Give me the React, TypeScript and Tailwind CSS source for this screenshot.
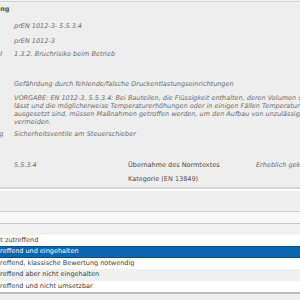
import React from "react";

function Label({ text, pr }: { text?: string; pr: string }) {
  return (
    <div className={`w-[14px] shrink-0 flex justify-end whitespace-nowrap text-[#666] ${pr}`}>
      {text ? <span>{text}</span> : null}
    </div>
  );
}

export default function App() {
  const options = [
    { t: "", cls: "h-[11px] bg-[#f1f1f1]", off: "ml-[-12px]" },
    { t: "Nicht zutreffend", cls: "h-[11px] bg-white", off: "ml-[-14px]" },
    { t: "Zutreffend und eingehalten", cls: "h-[12px] bg-[#0a66af] border-y border-[#0b4c84] text-white", sel: true, off: "ml-[-11px]" },
    { t: "Zutreffend, klassische Bewertung notwendig", cls: "h-[11px] bg-white", off: "ml-[-11px]" },
    { t: "Zutreffend aber nicht eingehalten", cls: "h-[12px] bg-[#f0f0f0]", off: "ml-[-11px]" },
    { t: "Zutreffend und nicht umsetzbar", cls: "h-[11px] bg-white", off: "ml-[-11px]" },
  ];
  return (
    <div className="w-[300px] h-[300px] overflow-hidden bg-[#eeeeee] font-['DejaVu_Sans',sans-serif] text-[6.5px] text-[#6a6a6a]">
      <div className="h-[1px] bg-[#f3f3f3]" />
      <div className="h-[1px] bg-[#d4d4d4]" />
      <div className="h-[16px] flex items-center">
        <div className="w-[9.5px] shrink-0 flex justify-end whitespace-nowrap font-bold text-[#55581c]">
          <span>Gefährdung</span>
        </div>
      </div>
      <div className="h-[18px] flex items-center italic">
        <Label pr="pr-[11px]" />
        <span className="whitespace-nowrap">prEN 1012-3- 5.5.3.4</span>
      </div>
      <div className="h-[12px] flex items-center italic">
        <Label pr="pr-[11px]" />
        <span className="whitespace-nowrap">prEN 1012-3</span>
      </div>
      <div className="h-[14px] flex items-center italic">
        <Label text="Normkapitel" pr="pr-[12px]" />
        <span className="whitespace-nowrap">1.3.2. Bruchrisiko beim Betrieb</span>
      </div>
      <div className="h-[16px]" />
      <div className="h-[14px] flex items-center italic">
        <Label pr="pr-[11px]" />
        <span className="whitespace-nowrap">Gefährdung durch fehlende/falsche Druckentlastungseinrichtungen</span>
      </div>
      <div className="mt-[2px] flex italic leading-[8px]">
        <Label pr="pr-[11px]" />
        <div className="whitespace-nowrap">
          <div>VORGABE: EN 1012-3, 5.5.3.4: Bei Bauteilen, die Flüssigkeit enthalten, deren Volumen sich durch Erwärmung</div>
          <div>lässt und die möglicherweise Temperaturerhöhungen oder in einigen Fällen Temperaturen unter dem Gefrierpunkt</div>
          <div>ausgesetzt sind, müssen Maßnahmen getroffen werden, um den Aufbau von unzulässigem Druck zu</div>
          <div>vermeiden.</div>
        </div>
      </div>
      <div className="mt-[2px] h-[14px] flex items-center italic">
        <Label text="Lösung" pr="pr-[10.5px]" />
        <span className="whitespace-nowrap">Sicherheitsventile am Steuerschieber</span>
      </div>
      <div className="h-[17px]" />
      <div className="h-[14px] flex items-center">
        <Label pr="pr-[11px]" />
        <div className="w-[114px] shrink-0 italic whitespace-nowrap">5.5.3.4</div>
        <div className="w-[128px] shrink-0 whitespace-nowrap text-[#4a4a4a]">Übernahme des Normtextes</div>
        <div className="italic whitespace-nowrap">Erheblich gekennzeichnet</div>
      </div>
      <div className="h-[14px] flex items-center">
        <Label pr="pr-[11px]" />
        <div className="w-[114px] shrink-0" />
        <div className="whitespace-nowrap text-[#4a4a4a]">Kategorie (EN 13849)</div>
      </div>
      <div className="h-[2px] bg-[#d4d4d4]" />
      <div className="h-[2px] bg-[#fbfbfb]" />
      <div className="h-[20px] bg-[#eeeeee]" />
      <div className="h-[1px] bg-[#cfcfcf]" />
      <div className="h-[11px] bg-[#f8f8f8]" />
      <div className="h-[1px] bg-[#c6c6c6]" />
      <div className="flex flex-col">
        {options.map((o, i) => (
          <div key={i} className={`flex items-center overflow-hidden ${o.cls} ${o.sel ? "" : "text-[#3a3a3a]"}`}>
            <span className={`${o.off} whitespace-nowrap`}>{o.t}</span>
          </div>
        ))}
      </div>
      <div className="h-[2px] bg-[#bdbdbd]" />
    </div>
  );
}
